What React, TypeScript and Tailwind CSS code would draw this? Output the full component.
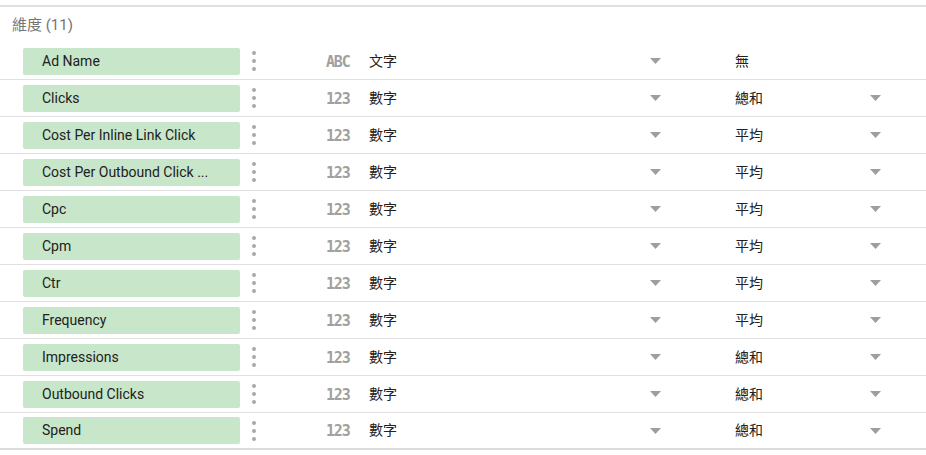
import React from 'react'

type Field = {
  name: string
  kind: 'ABC' | '123'
  type: string
  agg: string
  aggMenu: boolean
}

const fields: Field[] = [
  { name: 'Ad Name', kind: 'ABC', type: '文字', agg: '無', aggMenu: false },
  { name: 'Clicks', kind: '123', type: '數字', agg: '總和', aggMenu: true },
  { name: 'Cost Per Inline Link Click', kind: '123', type: '數字', agg: '平均', aggMenu: true },
  { name: 'Cost Per Outbound Click ...', kind: '123', type: '數字', agg: '平均', aggMenu: true },
  { name: 'Cpc', kind: '123', type: '數字', agg: '平均', aggMenu: true },
  { name: 'Cpm', kind: '123', type: '數字', agg: '平均', aggMenu: true },
  { name: 'Ctr', kind: '123', type: '數字', agg: '平均', aggMenu: true },
  { name: 'Frequency', kind: '123', type: '數字', agg: '平均', aggMenu: true },
  { name: 'Impressions', kind: '123', type: '數字', agg: '總和', aggMenu: true },
  { name: 'Outbound Clicks', kind: '123', type: '數字', agg: '總和', aggMenu: true },
  { name: 'Spend', kind: '123', type: '數字', agg: '總和', aggMenu: true },
]

function Caret() {
  return (
    <svg width="11" height="6" viewBox="0 0 11 6" className="block">
      <path d="M0 0 L11 0 L5.5 6 Z" fill="#9e9e9e" />
    </svg>
  )
}

function Dots() {
  return (
    <div className="flex flex-col gap-[4px] w-[4px] items-center">
      <span className="block w-[4px] h-[4px] rounded-full bg-[#a8a8a8]" />
      <span className="block w-[4px] h-[4px] rounded-full bg-[#a8a8a8]" />
      <span className="block w-[4px] h-[4px] rounded-full bg-[#a8a8a8]" />
    </div>
  )
}

function FieldRow({ field, last }: { field: Field; last: boolean }) {
  return (
    <div
      className={`flex items-center h-[37px] pl-[23px] ${
        last ? 'border-b-2 border-[#dcdcdc]' : 'border-b border-[#e0e0e0]'
      }`}
    >
      <div className="w-[217px] h-[27px] rounded-[2px] bg-[#c8e6c9] flex items-center pl-[19px] text-[14px] text-[#212121] truncate">
        {field.name}
      </div>
      <div className="ml-[12px]">
        <Dots />
      </div>
      <div className="ml-[70px] w-[43px] pt-[2px] text-[15px] leading-none font-bold text-[#a0a0a0] tracking-[-1.2px] font-['DejaVu_Sans_Mono',monospace]">
        {field.kind}
      </div>
      <div className="w-[281px] text-[14px] text-[#212121]">{field.type}</div>
      <div className="w-[11px]">
        <Caret />
      </div>
      <div className="ml-[74px] w-[135px] text-[14px] text-[#212121]">{field.agg}</div>
      <div className="w-[11px]">{field.aggMenu && <Caret />}</div>
    </div>
  )
}

export default function App() {
  return (
    <div className="w-[926px] h-[455px] overflow-hidden bg-white font-['Roboto','Noto_Sans_CJK_TC',sans-serif]">
      <div className="mt-[5px] border-t-2 border-[#e0e0e0]" />
      <div className="h-[36px] flex items-center pl-[12px] text-[15px] text-[#757575]">
        維度 (11)
      </div>
      <div>
        {fields.map((f, i) => (
          <FieldRow key={f.name} field={f} last={i === fields.length - 1} />
        ))}
      </div>
    </div>
  )
}
